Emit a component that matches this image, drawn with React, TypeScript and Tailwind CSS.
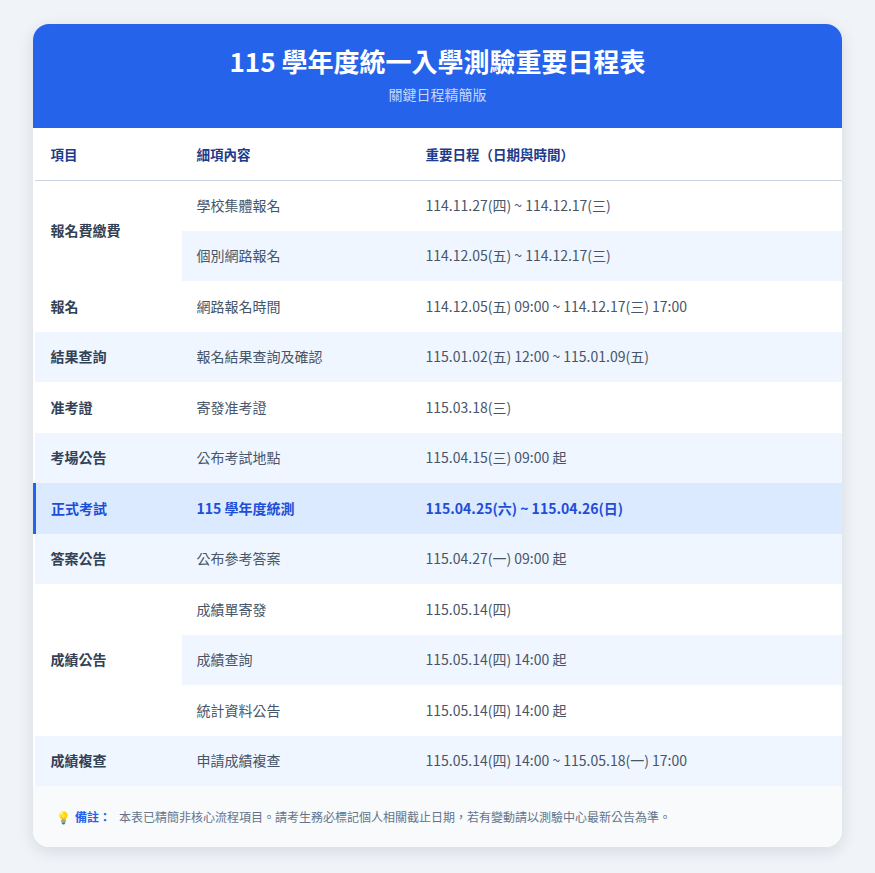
const rows = [
  { item: "報名費繳費", span: 2, detail: "學校集體報名", date: "114.11.27(四) ~ 114.12.17(三)" },
  { detail: "個別網路報名", date: "114.12.05(五) ~ 114.12.17(三)" },
  { item: "報名", span: 1, detail: "網路報名時間", date: "114.12.05(五) 09:00 ~ 114.12.17(三) 17:00" },
  { item: "結果查詢", span: 1, detail: "報名結果查詢及確認", date: "115.01.02(五) 12:00 ~ 115.01.09(五)" },
  { item: "准考證", span: 1, detail: "寄發准考證", date: "115.03.18(三)" },
  { item: "考場公告", span: 1, detail: "公布考試地點", date: "115.04.15(三) 09:00 起" },
  { item: "正式考試", span: 1, detail: "115 學年度統測", date: "115.04.25(六) ~ 115.04.26(日)", hl: true },
  { item: "答案公告", span: 1, detail: "公布參考答案", date: "115.04.27(一) 09:00 起" },
  { item: "成績公告", span: 3, detail: "成績單寄發", date: "115.05.14(四)" },
  { detail: "成績查詢", date: "115.05.14(四) 14:00 起" },
  { detail: "統計資料公告", date: "115.05.14(四) 14:00 起" },
  { item: "成績複查", span: 1, detail: "申請成績複查", date: "115.05.14(四) 14:00 ~ 115.05.18(一) 17:00" },
];

export default function App() {
  return (
    <div className="min-h-screen bg-[#f0f4f8] px-[33px] pt-6 pb-6" style={{ fontFamily: '"Noto Sans CJK TC", "Noto Sans", sans-serif' }}>
      <div className="bg-white rounded-2xl overflow-hidden shadow-[0_4px_16px_rgba(15,23,42,0.12)]">
        <div className="bg-[#2563eb] h-[104px] flex flex-col items-center pt-[18px]">
          <h1 className="text-white text-[26px] font-bold leading-[38px]">115 學年度統一入學測驗重要日程表</h1>
          <p className="text-[#c7d7fe] text-[14px] leading-[22px] mt-[3px]">關鍵日程精簡版</p>
        </div>
        <table className="w-full border-collapse text-[14px] table-fixed">
          <colgroup>
            <col className="w-[147px]" />
            <col className="w-[228px]" />
            <col />
          </colgroup>
          <thead>
            <tr className="h-[52px] border-b border-[#cbd5e1] text-left text-[#1e3a8a] font-bold text-[13.5px]">
              <th className="pl-4 font-bold">項目</th>
              <th className="pl-[15px] font-bold">細項內容</th>
              <th className="pl-4 font-bold">重要日程（日期與時間）</th>
            </tr>
          </thead>
          <tbody>
            {rows.map((r, i) => {
              const bg = r.hl ? "bg-[#dbeafe]" : i % 2 === 1 ? "bg-[#eff6ff]" : "bg-white";
              const txt = r.hl ? "text-[#1d4ed8] font-bold" : "text-[#475569]";
              return (
                <tr key={i} className={`h-[50.5px] ${bg}`}>
                  {r.item && (
                    <td rowSpan={r.span} className={`${r.hl ? "border-l-[3px] border-[#2563eb] pl-[15px] text-[#1d4ed8]" : "pl-4 text-[#334155]"} font-bold ${r.span && r.span > 1 ? "bg-white" : ""}`}>
                      {r.item}
                    </td>
                  )}
                  <td className={`pl-[15px] ${txt}`}>{r.detail}</td>
                  <td className={`pl-4 ${txt}`}>{r.date}</td>
                </tr>
              );
            })}
          </tbody>
        </table>
        <div className="bg-[#f8fafc] h-[61px] flex items-center pl-[23px] text-[12px] text-[#64748b]">
          <span className="text-[#facc15] mr-1">💡</span>
          <span className="text-[#2563eb] font-bold mr-2">備註：</span>
          <span>本表已精簡非核心流程項目。請考生務必標記個人相關截止日期，若有變動請以測驗中心最新公告為準。</span>
        </div>
      </div>
    </div>
  );
}
